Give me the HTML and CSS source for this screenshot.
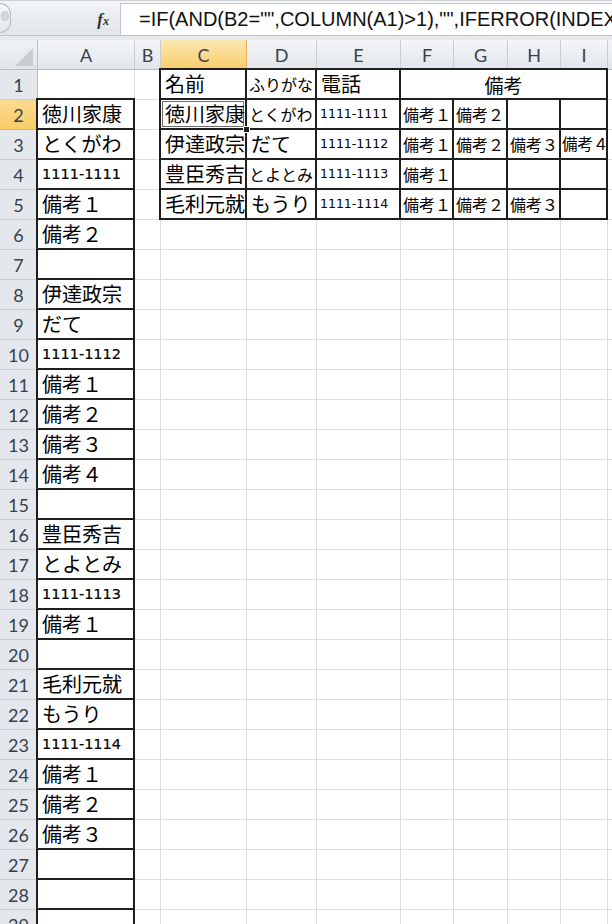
FILE: index.html
```html
<!DOCTYPE html>
<html lang="ja">
<head>
<meta charset="utf-8">
<title>Excel</title>
<link rel="stylesheet" href="styles.css">
</head>
<body>
<div class="fbar">
  <div class="nbend"><span class="dot"></span></div>
  <div class="fxarea"><span class="fx">f<span class="fxs">x</span></span></div>
  <div class="finput">=IF(AND(B2="",COLUMN(A1)&gt;1),"",IFERROR(INDEX(</div>
</div>
<div class="gap"></div>
<div class="sheet">
  <div class="corner"><svg width="18" height="18" viewBox="0 0 18 18"><polygon points="18,0 18,18 0,18" fill="#c9cdd2"/></svg></div>
  <div class="ch">A</div><div class="ch">B</div><div class="ch sel">C</div><div class="ch">D</div><div class="ch">E</div><div class="ch">F</div><div class="ch">G</div><div class="ch">H</div><div class="ch">I</div><div class="ch"></div>

  <div class="rh">1</div><div class="c"></div><div class="c"></div><div class="c b">名前</div><div class="c b s">ふりがな</div><div class="c b">電話</div><div class="c b merge">備考</div><div class="c"></div>

  <div class="rh sel">2</div><div class="c b">徳川家康</div><div class="c"></div><div class="c b act">徳川家康</div><div class="c b s">とくがわ</div><div class="c b p">1111-1111</div><div class="c b s">備考１</div><div class="c b s">備考２</div><div class="c b"></div><div class="c b"></div><div class="c"></div>

  <div class="rh">3</div><div class="c b">とくがわ</div><div class="c"></div><div class="c b">伊達政宗</div><div class="c b">だて</div><div class="c b p">1111-1112</div><div class="c b s">備考１</div><div class="c b s">備考２</div><div class="c b s">備考３</div><div class="c b s t">備考４</div><div class="c"></div>

  <div class="rh">4</div><div class="c b n">1111-1111</div><div class="c"></div><div class="c b">豊臣秀吉</div><div class="c b s">とよとみ</div><div class="c b p">1111-1113</div><div class="c b s">備考１</div><div class="c b"></div><div class="c b"></div><div class="c b"></div><div class="c"></div>

  <div class="rh">5</div><div class="c b">備考１</div><div class="c"></div><div class="c b">毛利元就</div><div class="c b">もうり</div><div class="c b p">1111-1114</div><div class="c b s">備考１</div><div class="c b s">備考２</div><div class="c b s">備考３</div><div class="c b"></div><div class="c"></div>

  <div class="rh">6</div><div class="c b">備考２</div><div class="c"></div><div class="c"></div><div class="c"></div><div class="c"></div><div class="c"></div><div class="c"></div><div class="c"></div><div class="c"></div><div class="c"></div>
  <div class="rh">7</div><div class="c b"></div><div class="c"></div><div class="c"></div><div class="c"></div><div class="c"></div><div class="c"></div><div class="c"></div><div class="c"></div><div class="c"></div><div class="c"></div>
  <div class="rh">8</div><div class="c b">伊達政宗</div><div class="c"></div><div class="c"></div><div class="c"></div><div class="c"></div><div class="c"></div><div class="c"></div><div class="c"></div><div class="c"></div><div class="c"></div>
  <div class="rh">9</div><div class="c b">だて</div><div class="c"></div><div class="c"></div><div class="c"></div><div class="c"></div><div class="c"></div><div class="c"></div><div class="c"></div><div class="c"></div><div class="c"></div>
  <div class="rh">10</div><div class="c b n">1111-1112</div><div class="c"></div><div class="c"></div><div class="c"></div><div class="c"></div><div class="c"></div><div class="c"></div><div class="c"></div><div class="c"></div><div class="c"></div>
  <div class="rh">11</div><div class="c b">備考１</div><div class="c"></div><div class="c"></div><div class="c"></div><div class="c"></div><div class="c"></div><div class="c"></div><div class="c"></div><div class="c"></div><div class="c"></div>
  <div class="rh">12</div><div class="c b">備考２</div><div class="c"></div><div class="c"></div><div class="c"></div><div class="c"></div><div class="c"></div><div class="c"></div><div class="c"></div><div class="c"></div><div class="c"></div>
  <div class="rh">13</div><div class="c b">備考３</div><div class="c"></div><div class="c"></div><div class="c"></div><div class="c"></div><div class="c"></div><div class="c"></div><div class="c"></div><div class="c"></div><div class="c"></div>
  <div class="rh">14</div><div class="c b">備考４</div><div class="c"></div><div class="c"></div><div class="c"></div><div class="c"></div><div class="c"></div><div class="c"></div><div class="c"></div><div class="c"></div><div class="c"></div>
  <div class="rh">15</div><div class="c b"></div><div class="c"></div><div class="c"></div><div class="c"></div><div class="c"></div><div class="c"></div><div class="c"></div><div class="c"></div><div class="c"></div><div class="c"></div>
  <div class="rh">16</div><div class="c b">豊臣秀吉</div><div class="c"></div><div class="c"></div><div class="c"></div><div class="c"></div><div class="c"></div><div class="c"></div><div class="c"></div><div class="c"></div><div class="c"></div>
  <div class="rh">17</div><div class="c b">とよとみ</div><div class="c"></div><div class="c"></div><div class="c"></div><div class="c"></div><div class="c"></div><div class="c"></div><div class="c"></div><div class="c"></div><div class="c"></div>
  <div class="rh">18</div><div class="c b n">1111-1113</div><div class="c"></div><div class="c"></div><div class="c"></div><div class="c"></div><div class="c"></div><div class="c"></div><div class="c"></div><div class="c"></div><div class="c"></div>
  <div class="rh">19</div><div class="c b">備考１</div><div class="c"></div><div class="c"></div><div class="c"></div><div class="c"></div><div class="c"></div><div class="c"></div><div class="c"></div><div class="c"></div><div class="c"></div>
  <div class="rh">20</div><div class="c b"></div><div class="c"></div><div class="c"></div><div class="c"></div><div class="c"></div><div class="c"></div><div class="c"></div><div class="c"></div><div class="c"></div><div class="c"></div>
  <div class="rh">21</div><div class="c b">毛利元就</div><div class="c"></div><div class="c"></div><div class="c"></div><div class="c"></div><div class="c"></div><div class="c"></div><div class="c"></div><div class="c"></div><div class="c"></div>
  <div class="rh">22</div><div class="c b">もうり</div><div class="c"></div><div class="c"></div><div class="c"></div><div class="c"></div><div class="c"></div><div class="c"></div><div class="c"></div><div class="c"></div><div class="c"></div>
  <div class="rh">23</div><div class="c b n">1111-1114</div><div class="c"></div><div class="c"></div><div class="c"></div><div class="c"></div><div class="c"></div><div class="c"></div><div class="c"></div><div class="c"></div><div class="c"></div>
  <div class="rh">24</div><div class="c b">備考１</div><div class="c"></div><div class="c"></div><div class="c"></div><div class="c"></div><div class="c"></div><div class="c"></div><div class="c"></div><div class="c"></div><div class="c"></div>
  <div class="rh">25</div><div class="c b">備考２</div><div class="c"></div><div class="c"></div><div class="c"></div><div class="c"></div><div class="c"></div><div class="c"></div><div class="c"></div><div class="c"></div><div class="c"></div>
  <div class="rh">26</div><div class="c b">備考３</div><div class="c"></div><div class="c"></div><div class="c"></div><div class="c"></div><div class="c"></div><div class="c"></div><div class="c"></div><div class="c"></div><div class="c"></div>
  <div class="rh">27</div><div class="c b"></div><div class="c"></div><div class="c"></div><div class="c"></div><div class="c"></div><div class="c"></div><div class="c"></div><div class="c"></div><div class="c"></div><div class="c"></div>
  <div class="rh">28</div><div class="c b"></div><div class="c"></div><div class="c"></div><div class="c"></div><div class="c"></div><div class="c"></div><div class="c"></div><div class="c"></div><div class="c"></div><div class="c"></div>
  <div class="rh">29</div><div class="c b"></div><div class="c"></div><div class="c"></div><div class="c"></div><div class="c"></div><div class="c"></div><div class="c"></div><div class="c"></div><div class="c"></div><div class="c"></div>
</div>
</body>
</html>
```

FILE: styles.css
```css
html, body {
  margin: 0;
  padding: 0;
}
body {
  width: 612px;
  height: 924px;
  overflow: hidden;
  background: #ffffff;
  font-family: "Noto Sans CJK JP", sans-serif;
  color: #000;
}

/* formula bar */
.fbar {
  display: flex;
  height: 36px;
  box-sizing: border-box;
  border-top: 1px solid #cdd1d6;
  border-bottom: 1px solid #bfc4ca;
  background: linear-gradient(#f2f4f6, #e2e5e9);
  padding-top: 2px;
}
.nbend {
  flex: 0 0 11px;
  box-sizing: border-box;
  height: 30px;
  border: 1px solid #b8bdc4;
  border-left: none;
  border-radius: 0 14px 14px 0;
  background: linear-gradient(#f7f8fa, #e4e7eb);
  display: flex;
  align-items: center;
}
.dot {
  display: block;
  width: 6px;
  height: 8px;
  margin-left: 1px;
  margin-top: -4px;
  border-radius: 50%;
  background: #d5d9de;
  border: 1px solid #c3c8ce;
}
.fxarea {
  flex: 0 0 109px;
  display: flex;
  justify-content: flex-end;
  align-items: center;
  padding-right: 11px;
  box-sizing: border-box;
}
.fx {
  font-family: "Liberation Serif", serif;
  font-style: italic;
  font-weight: bold;
  font-size: 17px;
  color: #333;
  line-height: 1;
}
.fxs {
  font-size: 12px;
}
.finput {
  flex: 1;
  background: #ffffff;
  border-left: 1px solid #c5c9ce;
  border-top: 1px solid #c5c9ce;
  padding-left: 18px;
  font-family: "Liberation Sans", sans-serif;
  font-size: 20px;
  color: #111;
  display: flex;
  align-items: center;
  white-space: nowrap;
  overflow: hidden;
}
.gap {
  height: 4px;
  background: #e6e9ed;
}

/* sheet grid */
.sheet {
  display: grid;
  grid-template-columns: 38px 97px 26px 86px 70px 84px 53px 54px 53px 47px 40px;
  grid-auto-rows: 30px;
}
.corner {
  box-sizing: border-box;
  background: linear-gradient(#eef1f4, #e1e5ea);
  border-right: 1px solid #b9bfc6;
  border-bottom: 1px solid #b9bfc6;
  display: flex;
  justify-content: flex-end;
  align-items: flex-end;
  padding: 0 4px 3px 0;
}
.ch, .rh {
  box-sizing: border-box;
  display: flex;
  align-items: center;
  justify-content: center;
  font-family: Lato, "Open Sans", sans-serif;
  font-size: 18px;
  color: #37414d;
  line-height: 1;
}
.ch {
  background: linear-gradient(#f3f5f7, #e2e6eb);
  border-right: 1px solid #c9cdd3;
  border-bottom: 1px solid #b3b9c1;
}
.ch.sel {
  background: linear-gradient(#fde8b2, #f8cc6b);
  border-right-color: #e8b25a;
  border-bottom: 1px solid #eda23c;
}
.rh {
  background: #e4e8ed;
  border-right: 1px solid #b3b9c1;
  border-bottom: 1px solid #c9cdd3;
}
.rh.sel {
  background: linear-gradient(#fbdc92, #f7cb68);
  border-right-color: #eda23c;
  border-bottom-color: #e8b25a;
}

.c {
  box-sizing: border-box;
  border-right: 1px solid #dadcdd;
  border-bottom: 1px solid #dadcdd;
  display: flex;
  align-items: center;
  padding-left: 4px;
  font-size: 20px;
  line-height: 1;
  white-space: nowrap;
}
.c.b {
  border-right: 2px solid #1f1f1f;
  border-bottom: 2px solid #1f1f1f;
  box-shadow: -1px -1px 0 1px #1f1f1f;
}
.c.s {
  font-size: 16px;
  padding-left: 2px;
}
.c.t {
  font-size: 15.5px;
  padding-left: 1px;
}
.c.n {
  font-family: "DejaVu Sans", sans-serif;
  font-size: 14.5px;
  padding-left: 4px;
  -webkit-text-stroke: 0.2px #000;
}
.c.p {
  font-family: "DejaVu Sans", sans-serif;
  font-size: 12.5px;
  padding-left: 3px;
}
.c.merge {
  grid-column: span 4;
  justify-content: center;
  padding-left: 0;
  font-size: 19px;
}
.c.act {
  position: relative;
  z-index: 1;
  box-shadow: -1px -1px 0 1px #1f1f1f, inset 0 0 0 1px #ffffff, inset 0 0 0 2px #6e6e6e;
}
.c.act::after {
  content: "";
  position: absolute;
  right: -5px;
  bottom: -5px;
  width: 5px;
  height: 5px;
  background: #1f1f1f;
  border: 1px solid #ffffff;
}
```
